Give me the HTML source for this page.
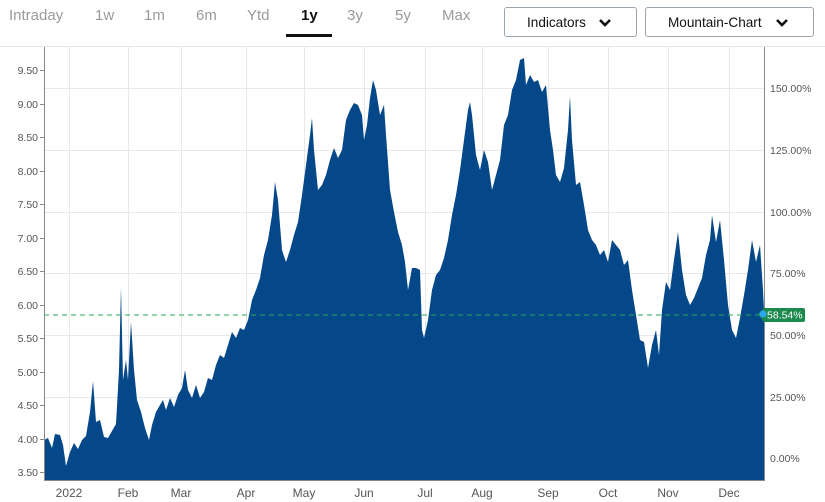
<!DOCTYPE html>
<html><head><meta charset="utf-8"><style>
body{margin:0;width:825px;height:502px;background:#fff;overflow:hidden;position:relative;font-family:"Liberation Sans",sans-serif}
.tab{position:absolute;top:7px;font-size:15px;color:#9a9a9a}
.btn{position:absolute;top:7px;height:30px;border:1px solid #9aa5ae;border-radius:3px;box-sizing:border-box}
.bt{position:absolute;top:6px;font-size:14px;color:#111;white-space:nowrap;transform:scaleX(.97);transform-origin:left}
svg{position:absolute;left:0;top:0}
</style></head><body>
<div class="tab" style="left:9px">Intraday</div>
<div class="tab" style="left:95px">1w</div>
<div class="tab" style="left:144px">1m</div>
<div class="tab" style="left:196px">6m</div>
<div class="tab" style="left:247px">Ytd</div>
<div class="tab" style="left:301px;color:#111;font-weight:bold">1y</div>
<div class="tab" style="left:347px">3y</div>
<div class="tab" style="left:395px">5y</div>
<div class="tab" style="left:442px">Max</div>
<div style="position:absolute;left:286px;top:34px;width:46px;height:3px;background:#111"></div>
<div class="btn" style="left:504px;width:133px"><span class="bt" style="left:22px">Indicators</span>
<svg style="left:93px;top:10px" width="14" height="10"><path d="M2,2 L7,7 L12,2" fill="none" stroke="#111" stroke-width="2.6"/></svg></div>
<div class="btn" style="left:645px;width:169px"><span class="bt" style="left:22px">Mountain-Chart</span>
<svg style="left:129px;top:10px" width="14" height="10"><path d="M2,2 L7,7 L12,2" fill="none" stroke="#111" stroke-width="2.6"/></svg></div>
<svg width="825" height="502" font-family="Liberation Sans, sans-serif" font-size="11" fill="#555">
<line x1="0" y1="46.5" x2="825" y2="46.5" stroke="#e6e6e6"/>
<g stroke="#e8e8e8">
<line x1="44" y1="88.5" x2="764" y2="88.5"/><line x1="44" y1="150.5" x2="764" y2="150.5"/><line x1="44" y1="212.5" x2="764" y2="212.5"/><line x1="44" y1="273.5" x2="764" y2="273.5"/><line x1="44" y1="335.5" x2="764" y2="335.5"/><line x1="44" y1="397.5" x2="764" y2="397.5"/><line x1="44" y1="458.5" x2="764" y2="458.5"/>
<line x1="69.5" y1="47" x2="69.5" y2="480"/><line x1="128.5" y1="47" x2="128.5" y2="480"/><line x1="181.5" y1="47" x2="181.5" y2="480"/><line x1="246.5" y1="47" x2="246.5" y2="480"/><line x1="304.5" y1="47" x2="304.5" y2="480"/><line x1="364.5" y1="47" x2="364.5" y2="480"/><line x1="425.5" y1="47" x2="425.5" y2="480"/><line x1="482.5" y1="47" x2="482.5" y2="480"/><line x1="548.5" y1="47" x2="548.5" y2="480"/><line x1="608.5" y1="47" x2="608.5" y2="480"/><line x1="668.5" y1="47" x2="668.5" y2="480"/><line x1="729.5" y1="47" x2="729.5" y2="480"/>
</g>
<path fill="#04488a" d="M44,440 L48,438 52,448 55,434 60,435 63,445 66,466 70,452 74,443 78,449 82,440 86,436 90,412 93,381 96,422 100,420 104,437 108,438 112,431 116,424 119,370 121,287 123,380 126,360 128,380 131,322 134,370 137,400 141,412 145,428 149,440 152,425 156,412 160,405 163,400 166,410 170,398 174,407 178,395 182,388 185,370 188,390 192,398 196,385 200,398 204,392 208,378 212,380 216,365 220,355 224,358 228,345 232,332 236,338 240,328 244,330 248,320 252,300 256,290 260,278 264,255 268,240 272,215 275,182 278,200 282,250 286,262 290,250 294,235 298,222 302,195 306,165 310,135 312,118 314,150 318,190 322,185 326,175 330,160 334,148 338,158 342,150 346,120 350,110 354,103 358,105 362,115 364,140 367,125 370,98 373,80 376,90 380,115 384,105 386,135 390,190 394,212 398,232 402,245 405,262 408,290 412,268 416,268 420,270 422,330 424,338 428,320 432,290 436,275 440,270 444,258 448,240 452,215 456,195 460,170 464,140 468,110 470,102 472,115 476,155 480,170 484,150 488,162 492,190 496,175 500,160 504,125 508,115 512,90 516,80 520,60 524,58 526,85 530,75 534,82 538,80 542,92 546,85 550,130 553,150 556,175 560,182 564,168 568,130 570,96 572,140 576,185 580,182 584,205 588,230 592,240 596,245 600,255 604,250 608,262 612,240 616,245 620,250 624,265 628,260 632,290 636,315 640,340 644,342 648,368 652,345 656,330 659,355 662,310 666,282 670,290 674,260 678,232 682,270 686,295 690,305 694,298 698,288 702,278 706,255 710,240 712,215 716,242 720,220 724,260 728,305 732,330 736,338 740,318 744,295 748,270 752,240 756,262 760,245 763,290 764,310 764,480 44,480Z"/>
<line x1="44" y1="315" x2="764" y2="315" stroke="#2aa65a" stroke-dasharray="5,4"/>
<line x1="44.5" y1="47" x2="44.5" y2="480" stroke="#888"/>
<line x1="764.5" y1="47" x2="764.5" y2="480" stroke="#888"/>
<line x1="44" y1="480.5" x2="765" y2="480.5" stroke="#888"/>
<g stroke="#888"><line x1="40" y1="70.5" x2="44" y2="70.5"/><line x1="40" y1="104.5" x2="44" y2="104.5"/><line x1="40" y1="137.5" x2="44" y2="137.5"/><line x1="40" y1="171.5" x2="44" y2="171.5"/><line x1="40" y1="204.5" x2="44" y2="204.5"/><line x1="40" y1="238.5" x2="44" y2="238.5"/><line x1="40" y1="271.5" x2="44" y2="271.5"/><line x1="40" y1="305.5" x2="44" y2="305.5"/><line x1="40" y1="338.5" x2="44" y2="338.5"/><line x1="40" y1="372.5" x2="44" y2="372.5"/><line x1="40" y1="405.5" x2="44" y2="405.5"/><line x1="40" y1="439.5" x2="44" y2="439.5"/><line x1="40" y1="472.5" x2="44" y2="472.5"/></g>
<g text-anchor="end" font-size="10.5">
<text x="38" y="74">9.50</text><text x="38" y="108">9.00</text><text x="38" y="141">8.50</text><text x="38" y="175">8.00</text><text x="38" y="208">7.50</text><text x="38" y="242">7.00</text><text x="38" y="275">6.50</text><text x="38" y="309">6.00</text><text x="38" y="342">5.50</text><text x="38" y="376">5.00</text><text x="38" y="409">4.50</text><text x="38" y="443">4.00</text><text x="38" y="476">3.50</text>
</g>
<g font-size="10.5"><text x="770" y="92">150.00%</text><text x="770" y="154">125.00%</text><text x="770" y="216">100.00%</text><text x="770" y="277">75.00%</text><text x="770" y="339">50.00%</text><text x="770" y="401">25.00%</text><text x="770" y="462">0.00%</text></g>
<g text-anchor="middle" font-size="12" fill="#555">
<text x="69" y="497">2022</text><text x="128" y="497">Feb</text><text x="181" y="497">Mar</text><text x="246" y="497">Apr</text><text x="304" y="497">May</text><text x="364" y="497">Jun</text><text x="425" y="497">Jul</text><text x="482" y="497">Aug</text><text x="548" y="497">Sep</text><text x="608" y="497">Oct</text><text x="668" y="497">Nov</text><text x="729" y="497">Dec</text>
</g>
<path d="M758,314 L764,308 H803 a2,2 0 0 1 2,2 V320 a2,2 0 0 1 -2,2 H764Z" fill="#1b8a4c"/>
<circle cx="763" cy="314" r="3.5" fill="#29a8f0"/>
<text x="767" y="318.5" fill="#fff" font-size="10.5">58.54%</text>
</svg>
</body></html>
